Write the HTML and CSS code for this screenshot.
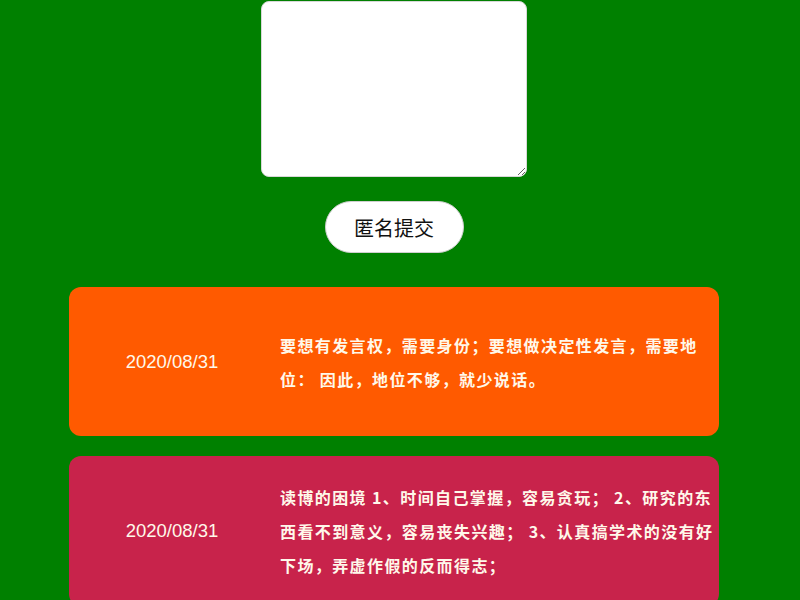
FILE: index.html
```html
<!DOCTYPE html>
<html lang="zh">
<head>
<meta charset="utf-8">
<title>匿名留言</title>
<link rel="stylesheet" href="styles.css">
</head>
<body>
<div class="page">
  <textarea class="box"></textarea>
  <button class="submit">匿名提交</button>
  <div class="card orange">
    <div class="date">2020/08/31</div>
    <div class="text">要想有发言权，需要身份；要想做决定性发言，需要地<br>位： 因此，地位不够，就少说话。</div>
  </div>
  <div class="card crimson">
    <div class="date">2020/08/31</div>
    <div class="text">读博的困境 1、时间自己掌握，容易贪玩； 2、研究的东<br>西看不到意义，容易丧失兴趣； 3、认真搞学术的没有好<br>下场，弄虚作假的反而得志；</div>
  </div>
</div>
</body>
</html>
```
FILE: styles.css
```css
html, body {
  margin: 0;
  padding: 0;
  background: #008000;
  overflow: hidden;
}
.page {
  width: 788px;
  display: flex;
  flex-direction: column;
  align-items: center;
  padding-top: 1px;
}
.box {
  width: 266px;
  height: 176px;
  box-sizing: border-box;
  border: 1px solid #d8d8d8;
  border-radius: 8px;
  background: #fff;
  margin: 0;
  display: block;
}
.submit {
  margin-top: 24px;
  width: 139px;
  height: 52px;
  border-radius: 26px;
  border: 1px solid #cfcfcf;
  background: #fff;
  color: #111;
  font-family: "Noto Sans CJK SC", sans-serif;
  font-size: 20px;
  cursor: pointer;
}
.card {
  margin-top: 34px;
  width: 650px;
  height: 149px;
  border-radius: 12px;
  display: flex;
  align-items: center;
  box-sizing: border-box;
  padding: 0 20px;
  color: #fff8ea;
}
.card + .card {
  margin-top: 20px;
  height: 150px;
}
.orange { background: #ff5a00; }
.crimson { background: #c8234b; }
.date {
  width: 166px;
  text-align: center;
  font-family: "Liberation Sans", Arial, sans-serif;
  font-size: 18.5px;
  flex: none;
}
.text {
  margin-left: 25px;
  width: 440px;
  font-family: "Noto Sans CJK SC", sans-serif;
  font-weight: 700;
  font-size: 16px;
  letter-spacing: 1.4px;
  line-height: 34px;
  white-space: nowrap;
}
```
